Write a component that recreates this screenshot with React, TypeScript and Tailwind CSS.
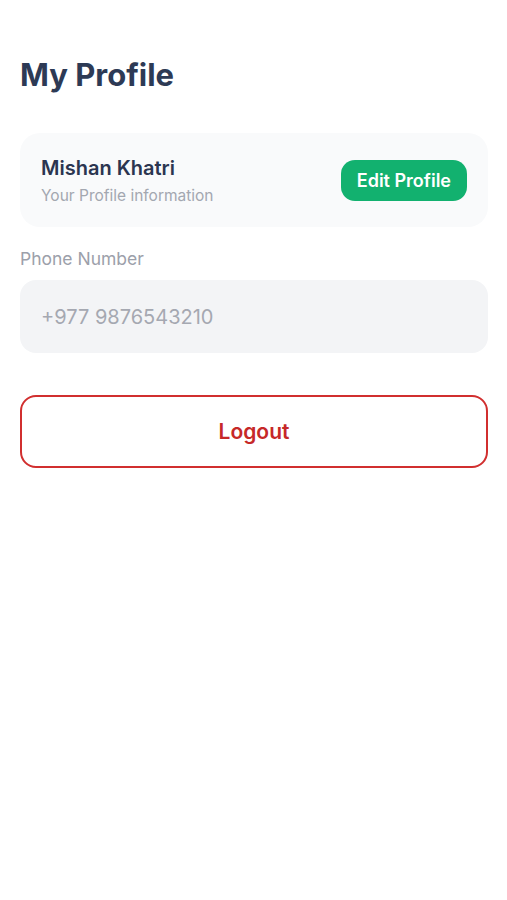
export default function App() {
  return (
    <div className="min-h-screen bg-white pl-5 pr-[19px] pt-[53px] font-['Inter','Noto_Sans',sans-serif]">
      {/* Title */}
      <h1 className="text-[31px] leading-[44px] font-bold text-[#2d3a55]">My Profile</h1>

      {/* Profile card */}
      <div className="mt-[36px] flex items-center justify-between rounded-[20px] bg-[#f9fafb] pl-[21px] pr-[21px] h-[94px]">
        <div className="flex flex-col">
          <span className="text-[20px] leading-[26px] font-semibold text-[#2b3550]">Mishan Khatri</span>
          <span className="mt-[5px] text-[15.5px] leading-[20px] text-[#a3a7b0]">Your Profile information</span>
        </div>
        <button className="h-[41px] px-[16px] rounded-[14px] bg-[#12b16f] text-white text-[18px] font-semibold">
          Edit Profile
        </button>
      </div>

      {/* Phone */}
      <div className="mt-[21px] text-[17.5px] leading-[22px] text-[#9ca0aa]">Phone Number</div>
      <div className="mt-[10px] flex items-center h-[73px] rounded-[16px] bg-[#f3f4f6] px-[21px]">
        <span className="text-[20px] text-[#a5a8b1]">+977 9876543210</span>
      </div>

      {/* Logout */}
      <button className="mt-[42px] w-full h-[73px] rounded-[16px] border-2 border-[#d12f2f] bg-white text-[21px] font-semibold text-[#c62828]">
        Logout
      </button>
    </div>
  );
}
